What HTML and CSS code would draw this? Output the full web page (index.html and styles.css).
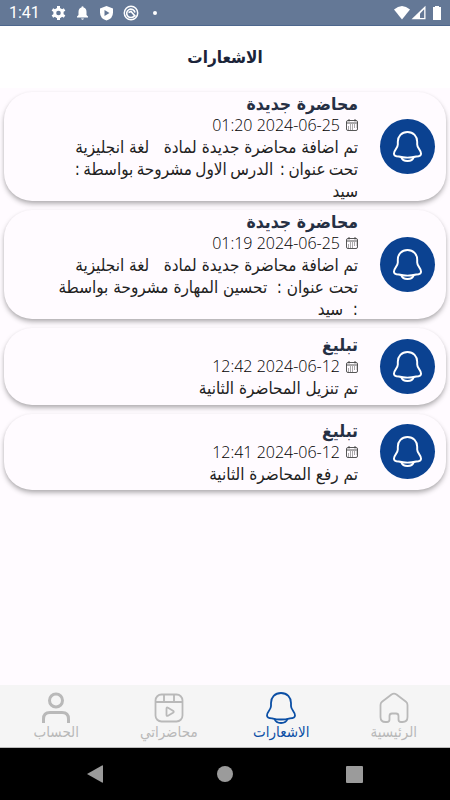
FILE: index.html
```html
<!DOCTYPE html>
<html lang="ar" dir="rtl">
<head>
    <meta charset="UTF-8">
    <meta name="viewport" content="width=device-width, initial-scale=1.0">
    <title>الاشعارات</title>
    <link rel="stylesheet" href="styles.css">
</head>
<body>
    <!-- Shared icons -->
    <svg class="sprite">
        <symbol id="bell" viewBox="0 0 32 34">
            <path d="M16 2C9.800 2 6 6.500 6 12V15C6 19 2 20.500 2 24.500C2 27 4 27.300 7 27.300Q16 29.700 25 27.300C28 27.300 30 27 30 24.500C30 20.500 26 19 26 15V12C26 6.500 22.200 2 16 2Z"/>
            <path d="M9.500 28C10.500 30.800 13 32 16 32S21.500 30.800 22.500 28"/>
        </symbol>
        <symbol id="calendar" viewBox="0 0 12 12">
            <rect x=".5" y="1.500" width="11" height="10" rx="1.500"/>
            <path d="M.5 4H11.500M3 0V2.500M9 0V2.500"/>
            <path d="M4 6H10.500M2 8H10.500M2 10H8" stroke-dasharray="1 1"/>
        </symbol>
    </svg>

    <div class="status-bar" dir="ltr">
        <span class="clock">1:41</span>
        <svg class="status-icons" width="112" height="18" viewBox="0 0 112 18">
            <g fill="#fff">
                <circle cx="7.500" cy="9" r="5.200"/>
                <path d="M7.500 2V16M1.400 5.500L13.600 12.500M1.400 12.500L13.600 5.500" stroke="#fff" stroke-width="3"/>
                <circle cx="7.500" cy="9" r="2.300" fill="#647896"/>
                <path d="M26 13.500V12.500L27.500 11V8Q27.500 4.300 30.500 3.500V2.800Q31.500 1.500 32.500 2.800V3.500Q35.500 4.300 35.500 8V11L37 12.500V13.500ZM30 14.500H33Q31.500 17 30 14.500Z"/>
                <path d="M55.500 2L62 4.500V8.500Q62 14.500 55.500 16.500Q49 14.500 49 8.500V4.500Z"/>
                <path d="M53.500 6V12L58.500 9Z" fill="#647896"/>
                <circle cx="104" cy="9" r="2"/>
            </g>
            <g fill="none" stroke="#fff" stroke-width="1.500">
                <circle cx="80" cy="9" r="6.700"/>
                <path d="M83.500 11.500A4.200 4.200 0 1 1 84 8.500M77.500 8.500L80 7.500L84.500 12.500" stroke-width="1.600"/>
            </g>
        </svg>
        <svg class="signal-icons" width="50" height="16" viewBox="0 0 50 16">
            <path d="M-1 4.500Q7 -2.500 15 4.500L7 14.500Z" fill="#fff"/>
            <path d="M16.500 14.300L30.500 .8V14.300Z" fill="#fff"/>
            <path d="M25 8.500L29.200 4.300V13H25Z" fill="#647896"/>
            <path d="M38 2H40V1H44V2H46V15H38Z" fill="#fff"/>
        </svg>
    </div>

    <header>
        <h1>الاشعارات</h1>
    </header>

    <main>
        <div class="card">
            <div class="avatar"><svg class="bell"><use href="#bell"/></svg></div>
            <div class="card-body">
                <h2>محاضرة جديدة</h2>
                <div class="date"><svg><use href="#calendar"/></svg><span dir="ltr">01:20 2024-06-25</span></div>
                <p>تم اضافة محاضرة جديدة لمادة &nbsp; لغة انجليزية<br><span class="tight">تحت عنوان : &nbsp;الدرس الاول مشروحة بواسطة :</span><br>سيد</p>
            </div>
        </div>
        <div class="card">
            <div class="avatar"><svg class="bell"><use href="#bell"/></svg></div>
            <div class="card-body">
                <h2>محاضرة جديدة</h2>
                <div class="date"><svg><use href="#calendar"/></svg><span dir="ltr">01:19 2024-06-25</span></div>
                <p>تم اضافة محاضرة جديدة لمادة &nbsp; لغة انجليزية<br>تحت عنوان : &nbsp;تحسين المهارة مشروحة بواسطة<br>: &nbsp;سيد</p>
            </div>
        </div>
        <div class="card short">
            <div class="avatar"><svg class="bell"><use href="#bell"/></svg></div>
            <div class="card-body">
                <h2>تبليغ</h2>
                <div class="date"><svg><use href="#calendar"/></svg><span dir="ltr">12:42 2024-06-12</span></div>
                <p>تم تنزيل المحاضرة الثانية</p>
            </div>
        </div>
        <div class="card short">
            <div class="avatar"><svg class="bell"><use href="#bell"/></svg></div>
            <div class="card-body">
                <h2>تبليغ</h2>
                <div class="date"><svg><use href="#calendar"/></svg><span dir="ltr">12:41 2024-06-12</span></div>
                <p>تم رفع المحاضرة الثانية</p>
            </div>
        </div>
    </main>

    <nav class="tabs">
        <a class="tab">
            <svg viewBox="0 0 32 34"><path d="M2.500 14Q2.500 12 4 10.800L13.500 3.500Q16 1.800 18.500 3.500L28 10.800Q29.500 12 29.500 14V26Q29.500 31 24.500 31H23Q20.500 31 20.500 28.500V25Q20.500 22.500 18 22.500H14Q11.500 22.500 11.500 25V28.500Q11.500 31 9 31H7.500Q2.500 31 2.500 26Z"/></svg>
            <span>الرئيسية</span>
        </a>
        <a class="tab active">
            <svg viewBox="0 0 32 34"><use href="#bell"/></svg>
            <span>الاشعارات</span>
        </a>
        <a class="tab">
            <svg viewBox="0 0 32 34"><rect x="2.500" y="3.500" width="27" height="27" rx="6"/><path d="M2.500 11H29.500M11 3.500V11M21 3.500V11M13.500 17.500Q13.500 16 15 16.700L20 19.700Q21.500 20.800 20 21.800L15 24.700Q13.500 25.400 13.500 24Z"/></svg>
            <span>محاضراتي</span>
        </a>
        <a class="tab account">
            <svg viewBox="0 0 32 34"><circle cx="16" cy="9.500" r="6.500"/><path d="M3.500 32V28Q3.500 21.500 10 21.500H22Q28.500 21.500 28.500 28V32"/></svg>
            <span>الحساب</span>
        </a>
    </nav>

    <div class="system-nav" dir="ltr">
        <svg width="16" height="18"><path d="M0 9L15 .5Q16 0 16 1V17Q16 18 15 17.500Z"/></svg>
        <svg width="16" height="16"><circle cx="8" cy="8" r="8"/></svg>
        <svg width="17" height="17"><rect width="17" height="17" rx="1"/></svg>
    </div>
</body>
</html>
```
FILE: styles.css
```css
* {
    margin: 0;
    padding: 0;
    box-sizing: border-box;
}

body {
    display: flex;
    flex-direction: column;
    width: 450px;
    height: 800px;
    overflow: hidden;
    font-family: 'DejaVu Sans Condensed', 'DejaVu Sans', sans-serif;
    background: #fffbff;
    color: #222;
}

svg {
    display: block;
    flex: none;
}

.sprite {
    position: absolute;
    width: 0;
    height: 0;
}

/* Status bar */
.status-bar {
    display: flex;
    align-items: center;
    height: 26px;
    padding: 0 5px 0 9px;
    background: #647896;
    border-bottom: 1px solid #4d678d;
    color: #fff;
}

.clock {
    width: 42px;
    font: 16px/26px Roboto, sans-serif;
}

.signal-icons {
    margin-left: auto;
    overflow: visible;
}

header {
    height: 62px;
    background: #fff;
    text-align: center;
}

h1 {
    font-size: 17px;
    line-height: 62px;
    color: #1b2439;
}

/* Notifications */
main {
    flex: 1;
    display: flex;
    flex-direction: column;
    gap: 9px;
    padding: 4px 4px 0;
}

.card {
    display: flex;
    align-items: center;
    height: 109px;
    padding-right: 11px;
    border-radius: 28px;
    background: #fffbff;
    box-shadow: 0 3px 5px rgba(0, 0, 0, 0.28), 0 1px 3px rgba(0, 0, 0, 0.06);
}

.card.short {
    height: 76.500px;
}

.avatar {
    display: flex;
    align-items: center;
    justify-content: center;
    width: 55px;
    height: 55px;
    border-radius: 50%;
    background: #0b4291;
}

.bell {
    width: 31px;
    height: 33px;
    fill: none;
    stroke: #fff;
    stroke-width: 2;
}

.card-body {
    margin-right: 22px;
    padding-top: 1px;
    white-space: nowrap;
}

h2 {
    font-size: 17.500px;
    line-height: 22px;
    color: #263044;
}

.date {
    display: flex;
    align-items: center;
    gap: 6px;
    height: 21px;
    font: 16px/21px 'Open Sans', sans-serif;
    font-weight: 300;
    color: #000;
}

.date svg {
    width: 12px;
    height: 12px;
    fill: none;
    stroke: #444;
    stroke-width: 0.900;
}

.card p {
    font-size: 17px;
    line-height: 22px;
}

.tight {
    word-spacing: -1.500px;
}

/* Bottom tabs */
.tabs {
    display: flex;
    height: 63px;
    background: #f5f5f5;
    border-bottom: 1px solid #bbb;
}

.tab {
    display: flex;
    flex-direction: column;
    align-items: center;
    width: 112.500px;
    padding-top: 6px;
    color: #b9b9b9;
}

.tab svg {
    width: 32px;
    height: 34px;
    fill: none;
    stroke: currentColor;
    stroke-width: 1.800;
}

.tab.active {
    color: #0b4fa5;
}

.tab.account svg {
    stroke-width: 3;
}

.tab span {
    font-size: 15px;
    line-height: 15px;
}

/* Android buttons */
.system-nav {
    display: flex;
    align-items: center;
    justify-content: space-between;
    height: 52px;
    padding: 0 87px;
    background: #000;
    fill: #9b9b9b;
}
```
